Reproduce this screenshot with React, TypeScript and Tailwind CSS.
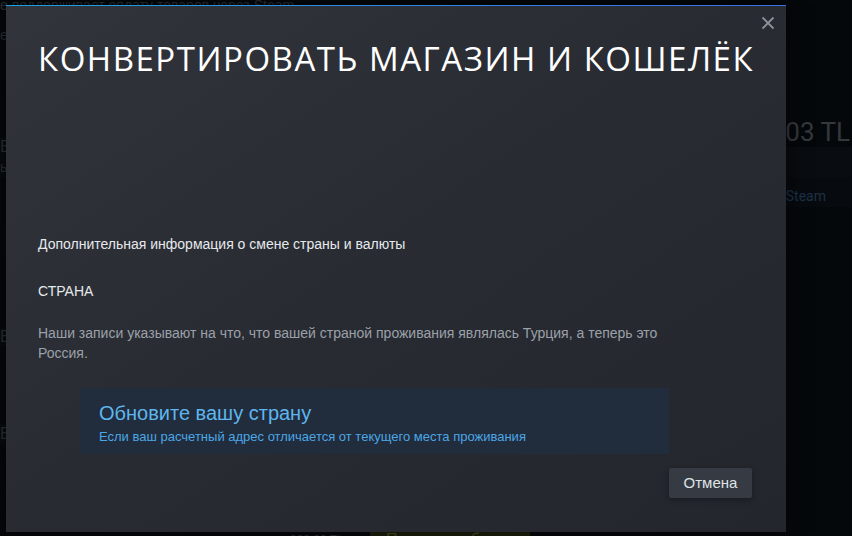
import React from "react";

const sans = "font-['Liberation_Sans',Arial,sans-serif]";

function CloseIcon() {
  return (
    <svg width="14" height="14" viewBox="0 0 14 14" fill="none">
      <path d="M1.5 1.5 L12.5 12.5 M12.5 1.5 L1.5 12.5" stroke="#8b929a" strokeWidth="1.8" />
    </svg>
  );
}

function PageBehind() {
  return (
    <div className={`flex flex-col w-full h-full ${sans}`}>
      <div className="h-[12px] text-[14px] leading-[12px] text-[#2c2f33] -mt-[1px] whitespace-nowrap">
        е поддерживает оплату товаров через Steam
      </div>
      <div className="flex flex-1">
        {/* left column, mostly under the modal */}
        <div className="w-[120px] flex flex-col text-[#2c2f33] whitespace-nowrap text-[16px] leading-[20px]">
          <div className="h-[20px] mt-[14px] text-[14px]">е</div>
          <div className="h-[40px] mt-[92px] bg-[#080b0e]">
            <div>Вы</div>
            <div className="text-[14px]">ь</div>
          </div>
          <div className="h-[20px] mt-[150px] bg-[#080b0e]">Вы</div>
          <div className="h-[20px] mt-[77px] bg-[#080b0e]">Вы</div>
        </div>
        <div className="flex-1"></div>
        {/* right column, mostly under the modal */}
        <div className="w-[200px] flex flex-col whitespace-nowrap">
          <div className="h-[106px]"></div>
          <div className="flex justify-end pr-[2px] text-[26px] leading-[30px] text-[#35383c] font-['Roboto',sans-serif]">
            1 003 TL
          </div>
          <div className="h-[30px] bg-[#090c10]"></div>
          <div className="h-[30px] bg-[#070a0e] flex justify-end pr-[26px] items-end pb-[0px] text-[14px] text-[#1d3247] font-['Roboto',sans-serif]">
            через Steam
          </div>
        </div>
      </div>
      <div className="h-[4px] flex items-start whitespace-nowrap text-[#2c2f33] text-[18px] leading-[16px]">
        <div className="w-[290px] pl-[2px]">купить вовоп и</div>
        <div className="w-[80px] text-[12px]">900,00 TL</div>
        <div className="w-[160px] bg-[#1d200d] text-[#4a4f1c] text-[16px] px-[16px]">Пополнить баланс</div>
        <div className="w-[13px] bg-[#0b0e12]"></div>
      </div>
    </div>
  );
}

export default function App() {
  return (
    <div className="relative w-[852px] h-[536px] overflow-hidden bg-[#05080b]">
      <PageBehind />

      {/* modal */}
      <div className={`absolute left-[6px] top-[5px] w-[780px] h-[527px] flex flex-col bg-gradient-to-br from-[#31343b] via-[#282b32] to-[#23262d] shadow-[0_0_20px_rgba(0,0,0,0.6)] ${sans}`}>
        <div className="h-px bg-gradient-to-r from-[#1a9fe0] to-[#3a6ee8]"></div>
        <div className="flex justify-end pt-[10px] pr-[11px] h-[25px]">
          <CloseIcon />
        </div>
        <h1 className="px-[32px] mt-[6px] text-[33px] leading-[44px] tracking-[0.046em] text-white font-['Open_Sans',sans-serif] font-normal whitespace-nowrap">
          КОНВЕРТИРОВАТЬ МАГАЗИН И КОШЕЛЁК
        </h1>
        <div className="px-[32px] mt-[155px] text-[14px] leading-[16px] text-[#e6e9ec]">
          Дополнительная информация о смене страны и валюты
        </div>
        <div className="px-[32px] mt-[31px] text-[14px] leading-[16px] text-[#e6e9ec]">
          СТРАНА
        </div>
        <p className="px-[32px] mt-[24px] w-[700px] text-[14px] leading-[20px] text-[#9ba1a9]">
          Наши записи указывают на что, что вашей страной проживания являлась Турция, а теперь это Россия.
        </p>
        <div className="ml-[74px] mt-[25px] w-[589px] h-[66px] bg-[#212c3c] px-[19px] pt-[14px]">
          <div className="text-[20px] leading-[22px] text-[#5eb6ee]">Обновите вашу страну</div>
          <div className="text-[13px] leading-[16px] mt-[5px] text-[#4ba7e6]">
            Если ваш расчетный адрес отличается от текущего места проживания
          </div>
        </div>
        <div className="flex justify-end pr-[34px] mt-[14px]">
          <button className="h-[30px] w-[83px] rounded-[2px] bg-[#363a43] text-[15px] text-[#dfe3e6] shadow-[0_2px_6px_rgba(0,0,0,0.3)]">
            Отмена
          </button>
        </div>
      </div>
    </div>
  );
}
